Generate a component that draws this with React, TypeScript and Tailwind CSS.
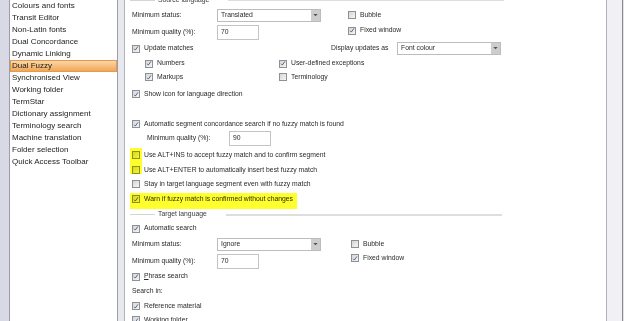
import type { ReactNode } from 'react'

/* ---------- small controls ---------- */

function Box({ checked }: { checked?: boolean }) {
  return (
    <span className="flex h-[8px] w-[8px] shrink-0 items-center justify-center border border-[#8f9090] bg-gradient-to-br from-[#d6d6d8] to-[#f6f6f6]">
      {checked && (
        <svg viewBox="0 0 8 8" className="h-[7px] w-[7px]">
          <path d="M1.6 4.3 L3.1 6.1 L6.6 1.2" fill="none" stroke="#33507e" strokeWidth="1.1" />
        </svg>
      )}
    </span>
  )
}

function Check({ checked, children }: { checked?: boolean; children: ReactNode }) {
  return (
    <span className="flex items-center gap-[4px] whitespace-nowrap">
      <Box checked={checked} />
      <span>{children}</span>
    </span>
  )
}

function Combo({ value, width = 'w-[104px]' }: { value: string; width?: string }) {
  return (
    <div className={`flex h-[13px] ${width} items-center border border-[#bcbcbc] bg-white`}>
      <span className="flex-1 pl-[3px]">{value}</span>
      <span className="flex h-full w-[9px] items-center justify-center bg-[#cdcdcd]">
        <svg viewBox="0 0 6 4" className="h-[3px] w-[5px]">
          <path d="M0 0 H6 L3 3 Z" fill="#555" />
        </svg>
      </span>
    </div>
  )
}

function Input({ value, width = 'w-[42px]' }: { value: string; width?: string }) {
  return (
    <div className={`flex h-[15px] ${width} items-start border border-[#c4c4c4] bg-white pl-[3px] pt-[1px]`}>{value}</div>
  )
}

function GroupHeader({ title, className = '' }: { title: string; className?: string }) {
  return (
    <div className={`flex items-center ${className}`}>
      <span className="ml-[5px] h-px w-[25px] bg-[#d4d4d4]" />
      <span className="px-[3px] text-[#3a3a3a]">{title}</span>
      <span className="ml-[16px] h-[2px] w-[276px] bg-[#dedede]" />
    </div>
  )
}

/* ---------- left list ---------- */

const pages = [
  'Colours and fonts',
  'Transit Editor',
  'Non-Latin fonts',
  'Dual Concordance',
  'Dynamic Linking',
  'Dual Fuzzy',
  'Synchronised View',
  'Working folder',
  'TermStar',
  'Dictionary assignment',
  'Terminology search',
  'Machine translation',
  'Folder selection',
  'Quick Access Toolbar',
]

function PageList() {
  return (
    <div className="w-[109px] shrink-0 overflow-hidden border-x border-[#9c9caa] bg-white text-[8px] text-[#232323]">
      <div className="flex flex-col">
        {pages.map((p) =>
          p === 'Dual Fuzzy' ? (
            <div
              key={p}
              className="flex h-[12px] items-center border border-[#e39a4c] bg-gradient-to-b from-[#fbd7a6] to-[#f1a656] pl-[1px] text-[#1a1a1a]"
            >
              {p}
            </div>
          ) : (
            <div key={p} className="flex h-[12px] items-center pl-[2px]">
              {p}
            </div>
          ),
        )}
      </div>
    </div>
  )
}

/* ---------- settings panel ---------- */

function Settings() {
  return (
    <div className="relative flex-1 overflow-hidden border-x border-[#b2b2bc] bg-white text-[6.8px] text-[#2a2a2a]">
      <div className="flex flex-col">
        <GroupHeader title="Source language" className="-mt-[6px] h-[12px]" />

        <div className="flex h-[18px] items-center pl-[7px]">
          <span className="w-[85px]">Minimum status:</span>
          <Combo value="Translated" />
          <span className="ml-[27px]">
            <Check>Bubble</Check>
          </span>
        </div>
        <div className="flex h-[16px] items-center pl-[7px]">
          <span className="w-[85px]">Minimum quality (%):</span>
          <Input value="70" />
          <span className="ml-[89px] -mt-[3px]">
            <Check checked>Fixed window</Check>
          </span>
        </div>
        <div className="flex h-[17px] items-center pl-[7px]">
          <span className="w-[199px]">
            <Check checked>Update matches</Check>
          </span>
          <span className="w-[66px]">Display updates as</span>
          <Combo value="Font colour" />
        </div>
        <div className="flex h-[13px] items-center pl-[20px]">
          <span className="w-[134px]">
            <Check checked>Numbers</Check>
          </span>
          <Check checked>User-defined exceptions</Check>
        </div>
        <div className="flex h-[14px] items-center pl-[20px]">
          <span className="w-[134px]">
            <Check checked>Markups</Check>
          </span>
          <Check>Terminology</Check>
        </div>
        <div className="flex h-[20px] items-center pl-[7px]">
          <Check checked>Show icon for language direction</Check>
        </div>

        <div className="h-[13px]" />

        <div className="flex h-[14px] items-center pl-[7px]">
          <Check checked>Automatic segment concordance search if no fuzzy match is found</Check>
        </div>
        <div className="flex h-[15px] items-center pl-[22px]">
          <span className="w-[82px]">Minimum quality (%):</span>
          <Input value="90" />
        </div>

        <div className="relative">
          <div className="flex h-[17px] items-center pl-[7px] pt-[1px]">
            <Check>Use ALT+INS to accept fuzzy match and to confirm segment</Check>
          </div>
          <div className="flex h-[14px] items-center pl-[7px]">
            <Check>Use ALT+ENTER to automatically insert best fuzzy match</Check>
          </div>
          <span className="absolute left-[5px] top-[2px] h-[26px] w-[12px] bg-[#ffff2e] mix-blend-multiply" />
        </div>
        <div className="flex h-[14px] items-center pl-[7px]">
          <Check>Stay in target language segment even with fuzzy match</Check>
        </div>
        <div className="relative flex h-[16px] items-center pl-[7px]">
          <Check checked>Warn if fuzzy match is confirmed without changes</Check>
          <span className="absolute left-[5px] top-[2px] h-[16px] w-[167px] bg-[#ffff2e] mix-blend-multiply" />
        </div>

        <GroupHeader title="Target language" className="h-[15px]" />

        <div className="flex h-[13px] items-center pl-[7px]">
          <Check checked>Automatic search</Check>
        </div>
        <div className="flex h-[18px] items-center pl-[7px]">
          <span className="w-[85px]">Minimum status:</span>
          <Combo value="Ignore" />
          <span className="ml-[30px]">
            <Check>Bubble</Check>
          </span>
        </div>
        <div className="flex h-[17px] items-center pl-[7px]">
          <span className="w-[85px]">Minimum quality (%):</span>
          <Input value="70" />
          <span className="ml-[92px] -mt-[7px]">
            <Check checked>Fixed window</Check>
          </span>
        </div>
        <div className="flex h-[13px] items-center pl-[7px]">
          <Check checked>
            <span className="underline">P</span>hrase search
          </Check>
        </div>
        <div className="flex h-[16px] items-center pl-[7px]">Search in:</div>
        <div className="flex h-[14px] items-center pl-[7px]">
          <Check checked>Reference material</Check>
        </div>
        <div className="flex h-[14px] items-center pl-[7px]">
          <Check checked>Working folder</Check>
        </div>
      </div>
    </div>
  )
}

export default function App() {
  return (
    <div className="flex h-[321px] w-[624px] overflow-hidden bg-[#e6e6ee] font-['Liberation_Sans',Arial,sans-serif]">
      <div className="w-[9px] shrink-0 bg-[#d9d9e5]" />
      <PageList />
      <div className="w-[6px] shrink-0 bg-[#e8e8ef]" />
      <Settings />
      <div className="w-[15px] shrink-0 bg-[#f1f1f5]" />
      <div className="w-[2px] shrink-0 border-l border-[#8a8a8a] bg-[#e0e6e6]" />
    </div>
  )
}
